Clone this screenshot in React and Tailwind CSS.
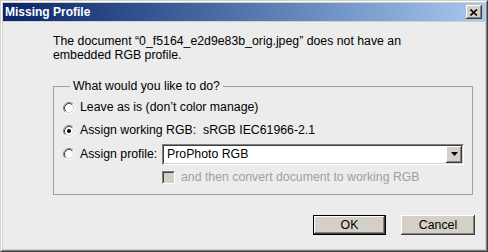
function Radio({ checked }) {
  return (
    <svg width="12" height="12" viewBox="0 0 12 12" className="shrink-0">
      <circle cx="6" cy="6" r="5" fill="#ffffff" />
      <path d="M2.11 9.89 A5.5 5.5 0 0 1 9.89 2.11" fill="none" stroke="#808080" strokeWidth="1" />
      <path d="M9.89 2.11 A5.5 5.5 0 0 1 2.11 9.89" fill="none" stroke="#ffffff" strokeWidth="1" />
      <path d="M2.82 9.18 A4.5 4.5 0 0 1 9.18 2.82" fill="none" stroke="#404040" strokeWidth="1" />
      <path d="M9.18 2.82 A4.5 4.5 0 0 1 2.82 9.18" fill="none" stroke="#d4d0c8" strokeWidth="1" />
      {checked && <circle cx="6" cy="6" r="2" fill="#000000" />}
    </svg>
  );
}

const raised =
  'bg-[#d4d0c8] shadow-[inset_-1px_-1px_#404040,inset_1px_1px_#ffffff,inset_-2px_-2px_#808080,inset_2px_2px_#d4d0c8]';

export default function App() {
  return (
    <div className="w-[488px] h-[252px] overflow-hidden font-['Liberation_Sans',Arial,sans-serif] text-[12.3px] leading-[13px] text-black">
      <div className="h-full border-t border-l border-[#d4d0c8] border-r border-b border-r-[#404040] border-b-[#404040]">
        <div className="h-full border-t border-l border-white border-r border-b border-r-[#808080] border-b-[#808080] bg-[#d4d0c8] p-px flex flex-col">
          {/* title bar */}
          <div className="h-[18px] shrink-0 flex items-center justify-between bg-linear-to-r from-[#0a246a] to-[#a6caf0] pl-[2px] pr-[3px]">
            <span className="font-bold text-white text-[12px]">Missing Profile</span>
            <div className={`w-[16px] h-[14px] flex items-center justify-center ${raised}`}>
              <svg width="8" height="7" viewBox="0 0 8 7">
                <path d="M0.5 0.5 L7 6.5 M7 0.5 L0.5 6.5" stroke="#000" strokeWidth="1.6" />
              </svg>
            </div>
          </div>

          {/* content */}
          <div className="flex-1 bg-[#ececec] mt-px pl-[50px] pt-[13px]">
            <p className="leading-[13.5px]">
              The document “0_f5164_e2d9e83b_orig.jpeg” does not have an
              <br />
              embedded RGB profile.
            </p>

            <fieldset className="mt-[18px] w-[420px] border border-[#a0a0a0] pl-[9px] pb-[5px]">
              <legend className="ml-[7px] px-[3px]">What would you like to do?</legend>

              <div className="pt-[3px]">
                <div className="h-[23px] flex items-center gap-[5px]">
                  <Radio />
                  <span>Leave as is (don’t color manage)</span>
                </div>
                <div className="h-[23px] flex items-center gap-[5px]">
                  <Radio checked />
                  <span>Assign working RGB:&nbsp; sRGB IEC61966-2.1</span>
                </div>
                <div className="h-[24px] flex items-center gap-[5px]">
                  <Radio />
                  <span className="w-[82px]">Assign profile:</span>
                  <div className="-ml-[5px] w-[302px] h-[21px] bg-white flex items-center justify-between border border-t-[#808080] border-l-[#808080] border-r-white border-b-white">
                    <div className="h-full flex-1 flex items-center border border-t-[#404040] border-l-[#404040] border-r-[#d4d0c8] border-b-[#d4d0c8] pl-[3px]">
                      <span className="flex-1">ProPhoto RGB</span>
                      <div className={`w-[16px] h-full flex items-center justify-center ${raised}`}>
                        <svg width="7" height="4" viewBox="0 0 7 4">
                          <path d="M0 0 H7 L3.5 4 Z" fill="#000" />
                        </svg>
                      </div>
                    </div>
                  </div>
                </div>
                <div className="h-[23px] flex items-center gap-[6px] pl-[99px]">
                  <div className="w-[13px] h-[13px] bg-[#d4d0c8] border border-t-[#808080] border-l-[#808080] border-r-white border-b-white">
                    <div className="w-full h-full border border-t-[#404040] border-l-[#404040] border-r-[#d4d0c8] border-b-[#d4d0c8]" />
                  </div>
                  <span className="text-[#a0a0a0]">and then convert document to working RGB</span>
                </div>
              </div>
            </fieldset>

            <div className="mt-[20px] flex gap-[15px] pl-[260px]">
              <div className="w-[73px] h-[20px] border border-black">
                <div className={`w-full h-full flex items-center justify-center ${raised}`}>OK</div>
              </div>
              <div className={`w-[74px] h-[20px] flex items-center justify-center ${raised}`}>Cancel</div>
            </div>
          </div>
        </div>
      </div>
    </div>
  );
}
